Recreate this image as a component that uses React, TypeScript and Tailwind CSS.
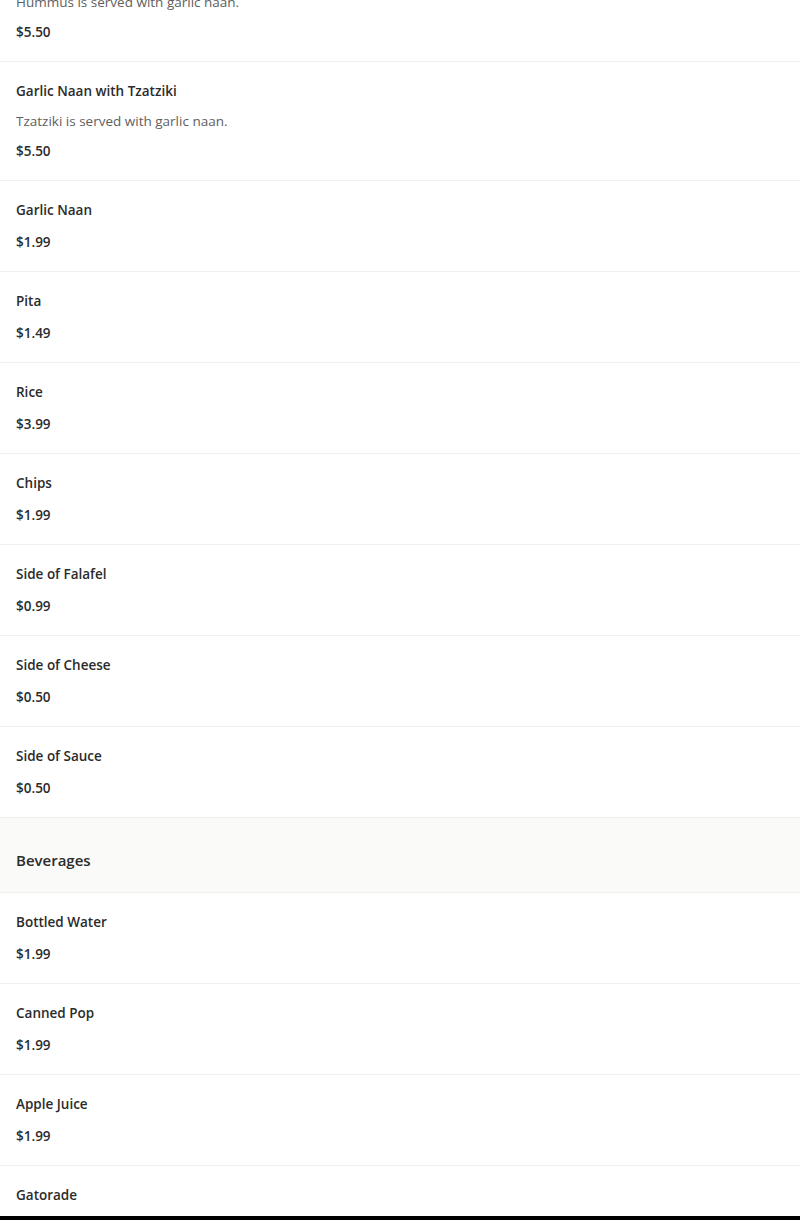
import React from "react";

type Item = { name: string; desc?: string; price: string };

const first: Item[] = [
  { name: "Garlic Naan with Hummus", desc: "Hummus is served with garlic naan.", price: "$5.50" },
  { name: "Garlic Naan with Tzatziki", desc: "Tzatziki is served with garlic naan.", price: "$5.50" },
];

const sides: Item[] = [
  { name: "Garlic Naan", price: "$1.99" },
  { name: "Pita", price: "$1.49" },
  { name: "Rice", price: "$3.99" },
  { name: "Chips", price: "$1.99" },
  { name: "Side of Falafel", price: "$0.99" },
  { name: "Side of Cheese", price: "$0.50" },
  { name: "Side of Sauce", price: "$0.50" },
];

const beverages: Item[] = [
  { name: "Bottled Water", price: "$1.99" },
  { name: "Canned Pop", price: "$1.99" },
  { name: "Apple Juice", price: "$1.99" },
  { name: "Gatorade", price: "$1.99" },
];

function Row({ item }: { item: Item }) {
  return (
    <div className="px-4 pt-4 pb-4 border-b border-[#f0f0f0] shadow-[0_1px_2px_rgba(0,0,0,0.02)] bg-white">
      <div className="text-[13.5px] leading-[26px] font-semibold text-[#2b2b2b]">{item.name}</div>
      {item.desc && (
        <div className="mt-[7px] text-[13.5px] leading-[20px] text-[#606060]">{item.desc}</div>
      )}
      <div className={`${item.desc ? "mt-[7px]" : "mt-[6px]"} text-[13.5px] leading-[26px] font-semibold text-[#2b2b2b]`}>
        {item.price}
      </div>
    </div>
  );
}

export default function App() {
  return (
    <div
      className="relative h-[1220px] overflow-hidden bg-white"
      style={{ fontFamily: '"Open Sans", "Noto Sans", sans-serif' }}
    >
      <div className="-mt-[57px]">
        <div>
          {first.map((it) => (
            <Row key={it.name} item={it} />
          ))}
        </div>
        <div>
          {sides.map((it) => (
            <Row key={it.name} item={it} />
          ))}
        </div>
        <div className="h-[75px] bg-[#fafaf8] border-b border-[#f0f0ee] flex items-center px-4">
          <span className="text-[15px] font-semibold text-[#2b2b2b] pt-[10px]">Beverages</span>
        </div>
        <div>
          {beverages.map((it) => (
            <Row key={it.name} item={it} />
          ))}
        </div>
      </div>
      <div className="absolute left-0 right-0 bottom-0 h-[4px] bg-black" />
    </div>
  );
}
